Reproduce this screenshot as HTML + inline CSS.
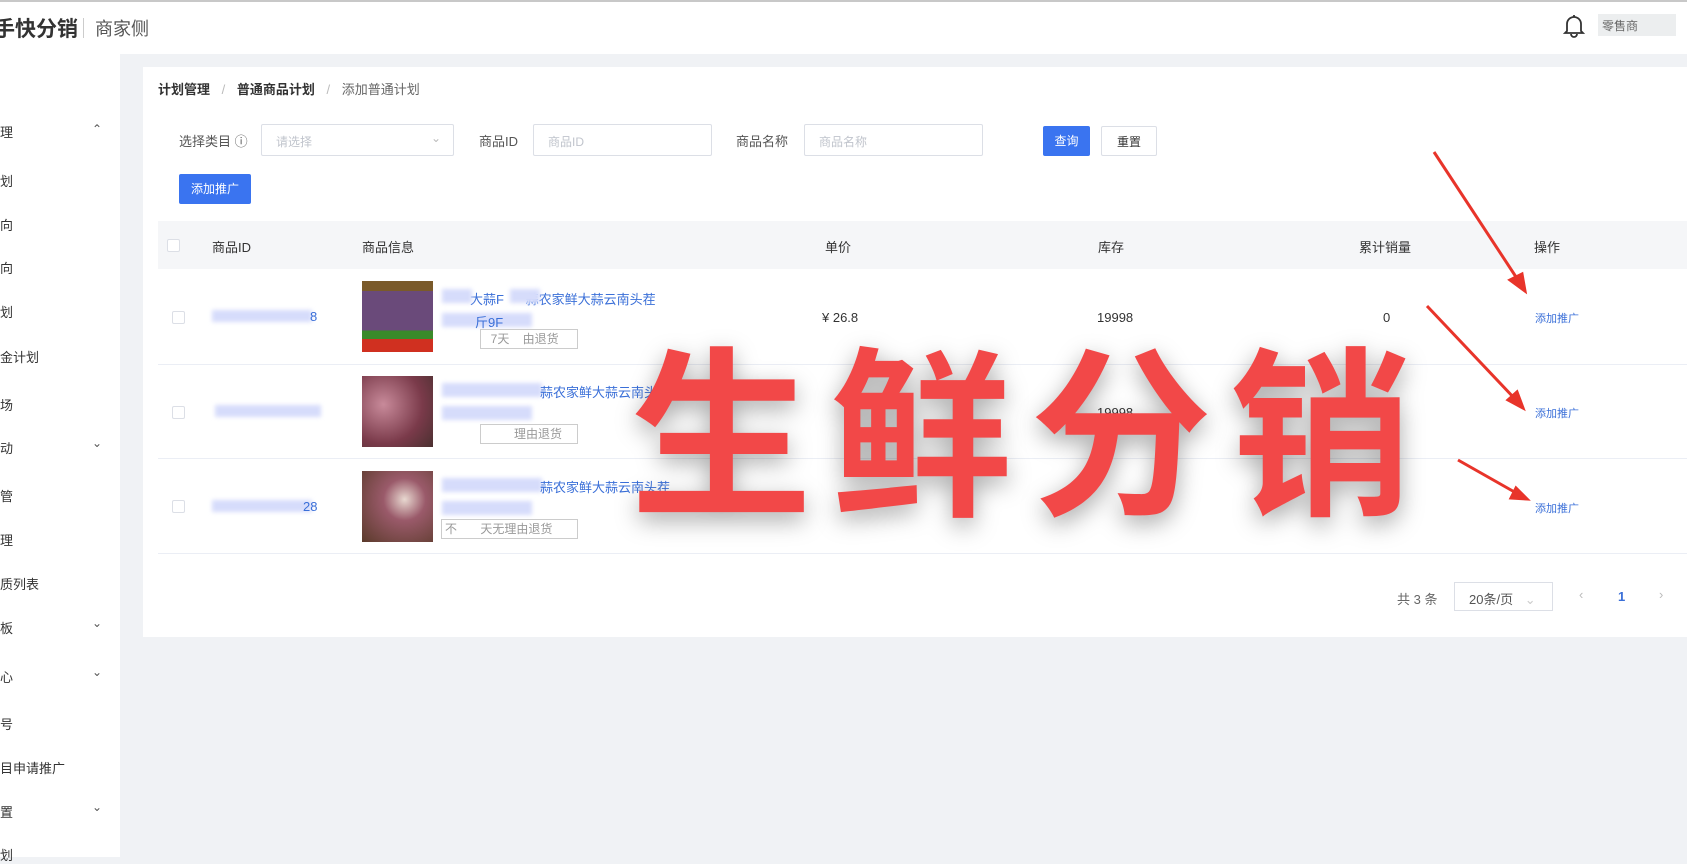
<!DOCTYPE html>
<html><head><meta charset="utf-8"><style>
*{margin:0;padding:0;box-sizing:border-box}
body{width:1687px;height:857px;overflow:hidden;background:#f0f2f5;font-family:"Liberation Sans","Noto Sans CJK SC",sans-serif;color:#333;position:relative;font-size:13px}
.abs{position:absolute}
.hdr{left:0;top:0;width:1687px;height:54px;background:#fff;border-top:2px solid #c8c8c8}
.side{left:0;top:54px;width:120px;height:803px;background:#fff}
.si{position:absolute;left:0;font-size:13px;color:#333}
.chev{position:absolute;left:92px;font-size:12px;color:#555}
.card{left:143px;top:67px;width:1544px;height:570px;background:#fff}
.inp{position:absolute;height:32px;border:1px solid #dcdfe6;background:#fff;border-radius:2px;color:#c0c4cc;font-size:12px;padding:8px 14px}
.lbl{position:absolute;font-size:13px;color:#555}
.btn{position:absolute;height:30px;border-radius:2px;font-size:12px;text-align:center;line-height:30px}
.th{position:absolute;top:237px;font-size:13px;color:#333}
.rowline{position:absolute;left:158px;width:1529px;height:1px;background:#ebeef5}
.cb{position:absolute;left:172px;width:13px;height:13px;border:1px solid #dcdfe6;border-radius:2px}
.blur{position:absolute;background:#d6dcfb;filter:blur(2px)}
.img{position:absolute;left:362px;width:71px;height:71px}
.lnk{position:absolute;font-size:13px;color:#3a6fd8}
.tag{position:absolute;border:1px solid #ccc;font-size:12px;color:#888;padding:0 3px;height:20px;line-height:18px;background:#fff}
.op{position:absolute;left:1535px;font-size:11px;color:#3a6fd8}
</style></head><body>
<div class="abs hdr">
 <div class="abs" style="left:-6px;top:11px;font-size:21px;font-weight:bold;color:#333">手快分销</div>
 <div class="abs" style="left:83px;top:16px;width:1px;height:20px;background:#ccc"></div>
 <div class="abs" style="left:95px;top:13px;font-size:18px;color:#555">商家侧</div>
 <svg class="abs" style="left:1563px;top:12px" width="22" height="24" viewBox="0 0 22 24"><path d="M4 17 L4 10 A7 7 0 0 1 18 10 L18 17 L20 19 L2 19 Z M8 20 A3 3 0 0 0 14 20" fill="none" stroke="#333" stroke-width="1.8"/><line x1="11" y1="1" x2="11" y2="3" stroke="#333" stroke-width="1.8"/></svg>
 <div class="abs" style="left:1598px;top:12px;width:78px;height:22px;background:#eceeef;font-size:12px;color:#666;padding:3px 4px">零售商</div>
</div>
<div class="abs side">
 <div class="si" style="top:68px">理</div><div class="chev" style="top:68px">⌃</div>
 <div class="si" style="top:117px">划</div>
 <div class="si" style="top:161px">向</div>
 <div class="si" style="top:204px">向</div>
 <div class="si" style="top:248px">划</div>
 <div class="si" style="top:293px">金计划</div>
 <div class="si" style="top:341px">场</div>
 <div class="si" style="top:384px">动</div><div class="chev" style="top:382px">⌄</div>
 <div class="si" style="top:432px">管</div>
 <div class="si" style="top:476px">理</div>
 <div class="si" style="top:520px">质列表</div>
 <div class="si" style="top:564px">板</div><div class="chev" style="top:562px">⌄</div>
 <div class="si" style="top:613px">心</div><div class="chev" style="top:611px">⌄</div>
 <div class="si" style="top:660px">号</div>
 <div class="si" style="top:704px">目申请推广</div>
 <div class="si" style="top:748px">置</div><div class="chev" style="top:746px">⌄</div>
 <div class="si" style="top:791px">划</div>
</div>
<div class="abs card"></div>
<div class="abs" style="left:158px;top:79px;font-size:13px"><b>计划管理</b> <span style="color:#bbb;margin:0 8px">/</span> <b>普通商品计划</b> <span style="color:#bbb;margin:0 8px">/</span> <span style="color:#666">添加普通计划</span></div>
<div class="lbl" style="left:179px;top:131px">选择类目 ⓘ</div>
<div class="inp" style="left:261px;top:124px;width:193px">请选择<span style="position:absolute;right:12px;top:6px;color:#bbb">⌄</span></div>
<div class="lbl" style="left:479px;top:131px">商品ID</div>
<div class="inp" style="left:533px;top:124px;width:179px">商品ID</div>
<div class="lbl" style="left:736px;top:131px">商品名称</div>
<div class="inp" style="left:804px;top:124px;width:179px">商品名称</div>
<div class="btn" style="left:1043px;top:126px;width:47px;background:#3a74f0;color:#fff">查询</div>
<div class="btn" style="left:1101px;top:126px;width:56px;border:1px solid #dcdfe6;color:#333;background:#fff">重置</div>
<div class="btn" style="left:179px;top:174px;width:72px;background:#3a74f0;color:#fff">添加推广</div>
<div class="abs" style="left:158px;top:221px;width:1529px;height:48px;background:#f5f6f8"></div>
<div class="cb" style="top:239px;left:167px;background:#fff"></div>
<div class="th" style="left:212px">商品ID</div>
<div class="th" style="left:362px">商品信息</div>
<div class="th" style="left:825px">单价</div>
<div class="th" style="left:1098px">库存</div>
<div class="th" style="left:1359px">累计销量</div>
<div class="th" style="left:1534px">操作</div>
<div class="rowline" style="top:364px"></div><div class="rowline" style="top:458px"></div><div class="rowline" style="top:553px"></div>
<!-- row1 -->
<div class="cb" style="top:311px"></div>
<div class="blur" style="left:212px;top:310px;width:100px;height:12px"></div><div class="lnk" style="left:310px;top:309px">8</div>
<div class="img" style="top:281px;background:linear-gradient(#7a5a2a 0 14%,#6a4a7a 14% 70%,#3a8a2a 70% 82%,#d03020 82%)"></div>
<div class="lnk" style="left:470px;top:289px">大蒜F&nbsp;&nbsp;&nbsp;&nbsp;&nbsp;&nbsp;蒜农家鲜大蒜云南头茬</div>
<div class="blur" style="left:442px;top:289px;width:30px;height:14px"></div><div class="blur" style="left:510px;top:289px;width:30px;height:14px"></div>
<div class="blur" style="left:442px;top:313px;width:90px;height:14px"></div><div class="lnk" style="left:475px;top:312px">斤9F</div>
<div class="tag" style="left:480px;top:329px;width:98px;color:#999">&nbsp;&nbsp;7天&nbsp;&nbsp;&nbsp;&nbsp;由退货</div>
<div class="abs" style="left:822px;top:310px">¥ 26.8</div>
<div class="abs" style="left:1097px;top:310px">19998</div>
<div class="abs" style="left:1383px;top:310px">0</div>
<div class="op" style="top:310px">添加推广</div>
<!-- row2 -->
<div class="cb" style="top:406px"></div>
<div class="blur" style="left:215px;top:405px;width:106px;height:12px"></div>
<div class="img" style="top:376px;background:radial-gradient(circle at 30% 40%,#c88a9a,#7a3a4a 60%,#4a3030)"></div>
<div class="blur" style="left:442px;top:383px;width:100px;height:14px"></div><div class="lnk" style="left:540px;top:382px">蒜农家鲜大蒜云南头</div>
<div class="blur" style="left:442px;top:406px;width:90px;height:14px"></div>
<div class="tag" style="left:480px;top:424px;width:98px;color:#999">&nbsp;&nbsp;&nbsp;&nbsp;&nbsp;&nbsp;&nbsp;&nbsp;&nbsp;理由退货</div>
<div class="abs" style="left:1097px;top:405px">19998</div>
<div class="op" style="top:405px">添加推广</div>
<!-- row3 -->
<div class="cb" style="top:500px"></div>
<div class="blur" style="left:212px;top:500px;width:100px;height:12px"></div><div class="lnk" style="left:303px;top:499px">28</div>
<div class="img" style="top:471px;background:radial-gradient(circle at 60% 40%,#e8d8d0,#9a5a6a 35%,#5a3a2a)"></div>
<div class="blur" style="left:442px;top:478px;width:100px;height:14px"></div><div class="lnk" style="left:540px;top:477px">蒜农家鲜大蒜云南头茬</div>
<div class="blur" style="left:442px;top:501px;width:90px;height:14px"></div>
<div class="tag" style="left:441px;top:519px;width:137px;color:#999">不&nbsp;&nbsp;&nbsp;&nbsp;&nbsp;&nbsp;&nbsp;天无理由退货</div>
<div class="op" style="top:500px">添加推广</div>
<!-- pagination -->
<div class="abs" style="left:1397px;top:589px;color:#666">共 3 条</div>
<div class="abs" style="left:1454px;top:582px;width:99px;height:29px;border:1px solid #dcdfe6;color:#555;padding:6px 14px">20条/页 <span style="color:#ccc;margin-left:8px">⌄</span></div>
<div class="abs" style="left:1579px;top:587px;color:#bbb">‹</div>
<div class="abs" style="left:1618px;top:589px;color:#3a6fd8;font-weight:bold">1</div>
<div class="abs" style="left:1659px;top:587px;color:#bbb">›</div>
<!-- overlay -->
<div class="abs" style="left:630px;top:314px;font-size:182px;font-weight:bold;color:#f24848;letter-spacing:18px;font-family:'Noto Sans CJK SC',sans-serif;text-shadow:0 8px 24px rgba(0,0,0,0.35);line-height:1.2;white-space:nowrap">生鲜分销</div>
<svg class="abs" style="left:0;top:0" width="1687" height="857">
<g stroke="#e8342a" stroke-width="3" fill="#e8342a">
<line x1="1434" y1="152" x2="1520" y2="283"/><polygon points="1525,291 1510,280 1522,274"/>
<line x1="1427" y1="306" x2="1516" y2="400"/><polygon points="1523,408 1508,400 1517,392"/>
<line x1="1458" y1="460" x2="1518" y2="494"/><polygon points="1527,499 1511,498 1516,488"/>
</g></svg>
</body></html>
